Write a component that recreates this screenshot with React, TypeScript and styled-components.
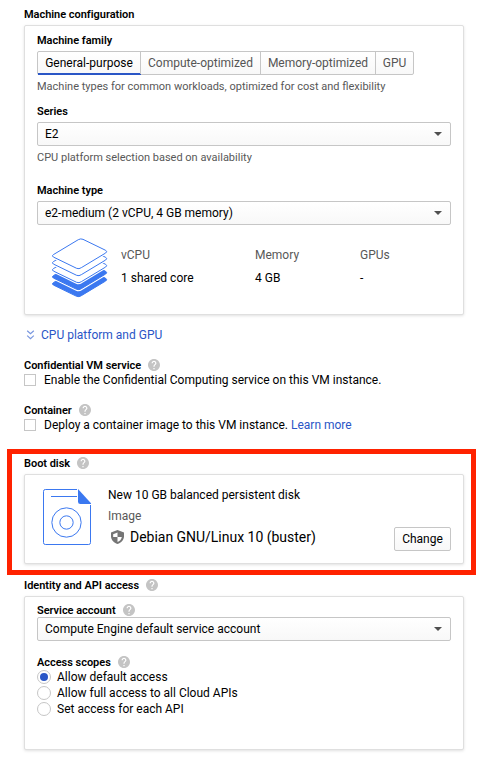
import React from "react";
import styled, { createGlobalStyle } from "styled-components";

const GlobalStyle = createGlobalStyle`
  *, *::before, *::after { box-sizing: border-box; }
  body { margin: 0; background: #fff; }
`;

const BLUE = "#3b78f0";

const Page = styled.main`
  width: 481px;
  height: 759px;
  overflow: hidden;
  padding: 8px 17px 0 24px;
  background: #fff;
  color: #000;
  font: 400 12px/16px Roboto, "Liberation Sans", sans-serif;
`;

const Label = styled.div<{ $top?: number; $bottom?: number }>`
  display: flex;
  align-items: flex-start;
  gap: 7px;
  height: 13px;
  margin: ${(p) => p.$top ?? 0}px 0 ${(p) => p.$bottom ?? 4}px;
  font-size: 11px;
  font-weight: 600;
  line-height: 13px;
  letter-spacing: -0.03px;
  white-space: nowrap;
`;

const Card = styled.section<{ $height: number }>`
  height: ${(p) => p.$height}px;
  padding: 0 12px;
  border: 1px solid #dfdfdf;
  border-radius: 2px;
  background: #fff;
  box-shadow: 0 1px 3px rgba(0, 0, 0, 0.12);
`;

const TabBar = styled.div`
  display: inline-flex;
  height: 24px;
  border: 1px solid #c6c6c6;
  border-radius: 2px;
  background: linear-gradient(#fff, #f8f8f8);
  vertical-align: top;
`;

const Tab = styled.button<{ $active?: boolean; $width: number }>`
  width: ${(p) => p.$width}px;
  height: 22px;
  padding: 0;
  border: 0;
  border-right: 1px solid #c6c6c6;
  background: transparent;
  color: ${(p) => (p.$active ? "#000" : "#555")};
  box-shadow: ${(p) => (p.$active ? "inset 0 -1px #2a56c6, 0 1px #2a56c6" : "none")};
  font: inherit;
  white-space: nowrap;
  &:last-child { border-right: 0; }
`;

const Helper = styled.p`
  margin: 5px 0 0;
  color: #585858;
  font-size: 11px;
  line-height: 13px;
  white-space: nowrap;
`;

const SelectBox = styled.div`
  display: flex;
  align-items: center;
  justify-content: space-between;
  height: 24px;
  padding: 0 8px 0 7px;
  border: 1px solid #c6c6c6;
  border-radius: 2px;
  background: linear-gradient(#fff, #f8f8f8);
  white-space: nowrap;
`;

const Specs = styled.div`
  display: grid;
  grid-template-columns: 69px 134px 105px 1fr;
  margin: 13px 0 0 15px;
`;

const Spec = styled.div`
  display: flex;
  flex-direction: column;
  gap: 7px;
  padding-top: 9px;
`;

const Muted = styled.span`
  color: #585858;
`;

const Link = styled.a`
  color: #2a56c6;
  text-decoration: none;
`;

const Expander = styled(Link)`
  display: flex;
  align-items: center;
  gap: 6px;
  margin: 12px 0 0 2px;
`;

const Option = styled.label`
  display: flex;
  align-items: flex-start;
  gap: 8px;
  height: 14px;
  line-height: 14px;
  white-space: nowrap;
`;

const CheckBox = styled.span`
  width: 12px;
  height: 12px;
  margin-top: 1px;
  border: 1px solid #c6c6c6;
`;

const Highlight = styled.div`
  margin: 17px -12px 0 -17px;
  padding: 3px 7px 6px 12px;
  border: 5px solid #ff2200;
`;

const Disk = styled.div`
  display: grid;
  grid-template-columns: 65px 1fr 57px;
  grid-template-rows: 64px;
  align-items: start;
  padding: 12px 0 0 6px;
`;

const DiskInfo = styled.div`
  display: flex;
  flex-direction: column;
  gap: 5px;
  white-space: nowrap;
`;

const ImageName = styled.div`
  display: flex;
  align-items: center;
  gap: 6px;
  padding-left: 3px;
  font-size: 14px;
  line-height: 16px;
  letter-spacing: -0.02px;
`;

const ChangeButton = styled.button`
  align-self: end;
  height: 24px;
  padding: 0;
  border: 1px solid #c6c6c6;
  border-radius: 2px;
  background: linear-gradient(#fff, #f8f8f8);
  color: #000;
  font: inherit;
`;

const RadioRow = styled.label`
  display: flex;
  align-items: center;
  gap: 6px;
  height: 16px;
  white-space: nowrap;
`;

const Radio = styled.span<{ $checked?: boolean }>`
  display: grid;
  place-items: center;
  width: 14px;
  height: 14px;
  border: 1px solid #c6c6c6;
  border-radius: 50%;
  &::after {
    content: "";
    width: 8px;
    height: 8px;
    border-radius: 50%;
    background: ${(p) => (p.$checked ? "#2a56c6" : "transparent")};
  }
`;

const DiskDrawing = styled.svg`
  margin-top: 2px;
`;

const HelpIcon = () => (
  <svg width="12" height="12" viewBox="2 2 20 20" fill="#c4c4c4">
    <path d="M12 2C6.48 2 2 6.48 2 12s4.480 10 10 10 10-4.480 10-10S17.520 2 12 2zm1 17h-2v-2h2v2zm2.070-7.750-.9.920C13.450 12.900 13 13.500 13 15h-2v-.5c0-1.100.45-2.100 1.170-2.830l1.240-1.260c.37-.36.59-.86.59-1.410 0-1.100-.9-2-2-2s-2 .9-2 2H8c0-2.210 1.790-4 4-4s4 1.790 4 4c0 .88-.36 1.680-.93 2.250z" />
  </svg>
);

const Arrow = () => (
  <svg width="8" height="4" viewBox="0 0 8 4"><path d="M0 0h8L4 4z" fill="#505050" /></svg>
);

const Select = ({ value }: { value: string }) => (
  <SelectBox><span>{value}</span><Arrow /></SelectBox>
);

const LAYER = "M40 74L115 29Q122 25 129 28L197 61Q203 65 197 69L124 113Q117 118 110 115L40 81Q34 77 40 74Z";

const StackIcon = () => (
  <svg width="56" height="60" viewBox="36 24 168 180">
    {[4, 3, 2, 1, 0].map((i) => (
      <g key={i} transform={`translate(0 ${i * 21})`}>
        <path d={LAYER} fill="#fff" stroke="#fff" strokeWidth="9" />
        <path d={LAYER} fill={i > 2 ? BLUE : "#fff"} stroke={BLUE} strokeWidth="3" />
      </g>
    ))}
  </svg>
);

const DiskIcon = () => (
  <DiskDrawing width="48" height="56" viewBox="129 147 144 168" fill="none" stroke={BLUE} strokeWidth="3">
    <path d="M231 148.500H136Q130.500 148.500 130.500 154V308Q130.500 313.500 136 313.500H266Q271.500 313.500 271.500 308V195" />
    <path d="M153 169.500H231" />
    <path d="M234 147L273 190V192H241Q234 192 234 185Z" fill={BLUE} stroke="none" />
    <circle cx="199.500" cy="247.500" r="44" />
    <circle cx="199.500" cy="247.500" r="20" />
  </DiskDrawing>
);

const ShieldIcon = () => (
  <svg width="13" height="14" viewBox="3 1 18 22" preserveAspectRatio="none">
    <path d="M12 1L3 5v6c0 5.550 3.840 10.740 9 12 5.160-1.260 9-6.450 9-12V5z" fill="#757575" />
    <path d="M12 5v7H6v-4.500zM12 12h6c-.7 4-3 6.800-6 8z" fill="#fff" />
  </svg>
);

const ExpandIcon = () => (
  <svg width="9" height="10" viewBox="0 0 9 10" fill="none" stroke="#7896df" strokeWidth="1.200">
    <path d="M1.200.8L4.500 3.800 7.800.8M1.200 5.600L4.500 8.600 7.800 5.600" />
  </svg>
);

export default function App() {
  return (
    <>
      <GlobalStyle />
      <Page>
        <Label>Machine configuration</Label>
        <Card $height={290}>
          <Label $top={8}>Machine family</Label>
          <TabBar>
            <Tab $active $width={103}>General-purpose</Tab>
            <Tab $width={120}>Compute-optimized</Tab>
            <Tab $width={115}>Memory-optimized</Tab>
            <Tab $width={37}>GPU</Tab>
          </TabBar>
          <Helper>Machine types for common workloads, optimized for cost and flexibility</Helper>
          <Label $top={12}>Series</Label>
          <Select value="E2" />
          <Helper>CPU platform selection based on availability</Helper>
          <Label $top={20}>Machine type</Label>
          <Select value="e2-medium (2 vCPU, 4 GB memory)" />
          <Specs>
            <StackIcon />
            <Spec><Muted>vCPU</Muted><span>1 shared core</span></Spec>
            <Spec><Muted>Memory</Muted><span>4 GB</span></Spec>
            <Spec><Muted>GPUs</Muted><span>-</span></Spec>
          </Specs>
        </Card>
        <Expander><ExpandIcon />CPU platform and GPU</Expander>
        <Label $top={16} $bottom={1}>Confidential VM service<HelpIcon /></Label>
        <Option><CheckBox /><span>Enable the Confidential Computing service on this VM instance.</span></Option>
        <Label $top={17} $bottom={1}>Container<HelpIcon /></Label>
        <Option><CheckBox /><span>Deploy a container image to this VM instance. <Link>Learn more</Link></span></Option>
        <Highlight>
          <Label>Boot disk<HelpIcon /></Label>
          <Card $height={90}>
            <Disk>
              <DiskIcon />
              <DiskInfo>
                <span>New 10 GB balanced persistent disk</span>
                <Muted>Image</Muted>
                <ImageName><ShieldIcon />Debian GNU/Linux 10 (buster)</ImageName>
              </DiskInfo>
              <ChangeButton>Change</ChangeButton>
            </Disk>
          </Card>
        </Highlight>
        <Label $top={4}>Identity and API access<HelpIcon /></Label>
        <Card $height={154}>
          <Label $top={7} $bottom={0}>Service account<HelpIcon /></Label>
          <Select value="Compute Engine default service account" />
          <Label $top={15} $bottom={0}>Access scopes<HelpIcon /></Label>
          <RadioRow><Radio $checked />Allow default access</RadioRow>
          <RadioRow><Radio />Allow full access to all Cloud APIs</RadioRow>
          <RadioRow><Radio />Set access for each API</RadioRow>
        </Card>
      </Page>
    </>
  );
}
